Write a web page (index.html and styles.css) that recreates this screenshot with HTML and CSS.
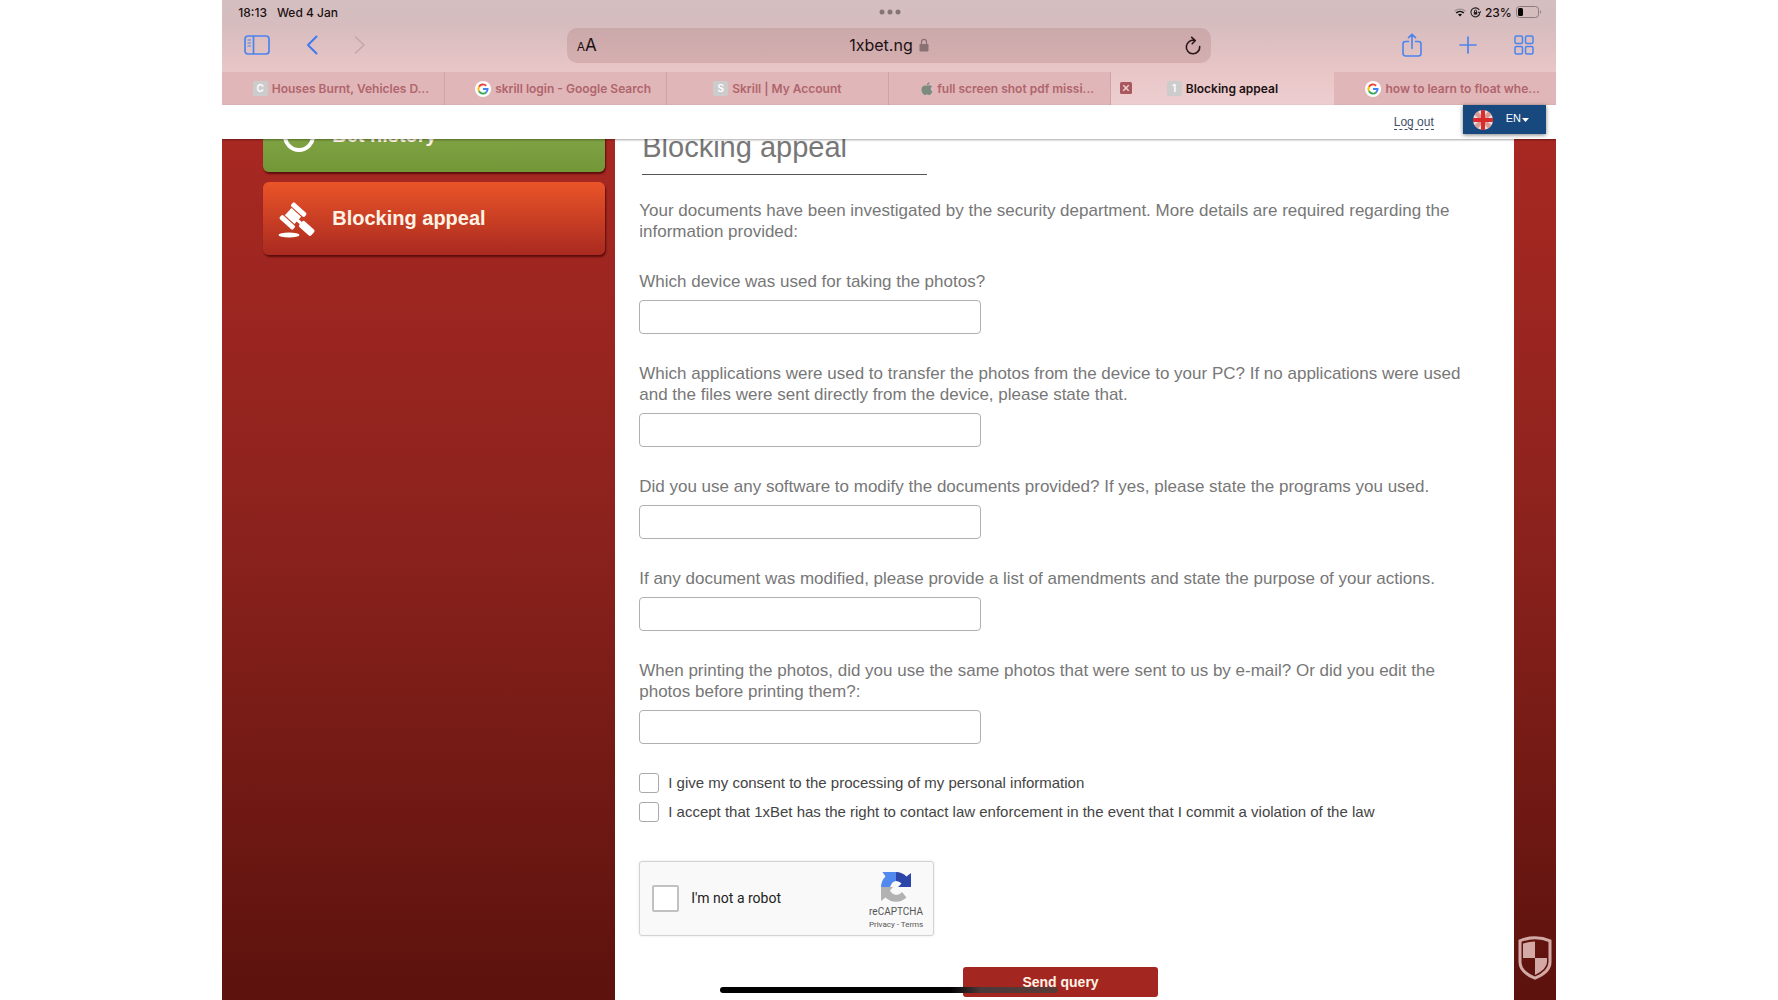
FILE: index.html
```html
<!DOCTYPE html>
<html lang="en">
<head>
  <meta charset="UTF-8">
  <meta name="viewport" content="width=device-width, initial-scale=1.0">
  <title>Blocking appeal</title>
  <link rel="stylesheet" href="styles.css">
</head>
<body>
  <div class="device">
    <div class="browser">
      <div class="status-bar">
        <div class="status-left"><span>18:13</span><span>Wed 4 Jan</span></div>
        <svg class="dots" width="22" height="6" viewBox="0 0 22 6" fill="#857376"><circle cx="3" cy="3" r="2.5"/><circle cx="11" cy="3" r="2.5"/><circle cx="19" cy="3" r="2.5"/></svg>
        <div class="status-right">
          <svg width="12" height="9" viewBox="0 0 12 9" fill="none"><path d="M.5 3.200C3.500.3 8.500.3 11.500 3.200" stroke="#a08e91" stroke-width="1.300"/><path d="M2.200 5C4.400 2.900 7.600 2.900 9.800 5" stroke="#111" stroke-width="1.600"/><path d="M4 6.500Q6 4.900 8 6.500L6 8.600z" fill="#111"/></svg>
          <svg width="11" height="11" viewBox="0 0 11 11" fill="none" stroke="#222"><path d="M9.800 6.500A4.500 4.500 0 1 1 9.300 3M10.600 4.200 9.600 6.200 8 4.800" stroke-width="1.100"/><rect x="3.800" y="5" width="3.400" height="2.600" fill="#222" stroke="none"/><path d="M4.500 5V4a1 1 0 0 1 2 0v1"/></svg>
          <span>23%</span>
          <svg width="26" height="12" viewBox="0 0 26 12" fill="none"><rect x=".5" y=".5" width="22" height="11" rx="3" stroke="#8d7c7e"/><rect x="2" y="2" width="5" height="8" rx="1.500" fill="#0a0505"/><path d="M24 4q2 2 0 4z" fill="#8d7c7e"/></svg>
        </div>
      </div>

      <div class="toolbar">
        <div class="tools tools-left">
          <button class="icon-btn" aria-label="Sidebar"><svg width="26" height="20" viewBox="0 0 26 20" fill="none" stroke="#4c84ee" stroke-width="1.700"><rect x="1" y="1" width="24" height="18" rx="3"/><path d="M9.500 1v18"/><path d="M3.500 5h3.500M3.500 8h3.500M3.500 11h3.500" stroke-width="1.200"/></svg></button>
          <button class="icon-btn" aria-label="Back"><svg width="12" height="20" viewBox="0 0 12 20" fill="none" stroke="#3f7bf0" stroke-width="2" stroke-linecap="round" stroke-linejoin="round"><path d="M10.500 1.500 2 10l8.500 8.500"/></svg></button>
          <button class="icon-btn" aria-label="Forward" disabled><svg width="12" height="20" viewBox="0 0 12 20" fill="none" stroke="#c8a6a8" stroke-width="1.700" stroke-linecap="round" stroke-linejoin="round"><path d="m1.500 2 8.500 8-8.500 8"/></svg></button>
        </div>
        <div class="address">
          <button class="text-size" aria-label="Text size"><small>A</small>A</button>
          <div class="url">1xbet.ng
            <svg width="10" height="14" viewBox="0 0 10 14"><rect x=".5" y="6" width="9" height="7.500" rx="1.200" fill="#8a7274"/><path d="M2.500 6.500V4a2.500 2.700 0 0 1 5 0v2.500" fill="none" stroke="#8a7274" stroke-width="1.200"/></svg>
          </div>
          <button class="icon-btn" aria-label="Reload"><svg width="16" height="19" viewBox="0 0 16 19" fill="none" stroke="#2b1518" stroke-width="1.600" stroke-linecap="round" stroke-linejoin="round"><path d="M9.500 4.500A6.700 6.700 0 1 0 14.700 10.500M6.700 1.300 10.300 4.500 7.200 7.700"/></svg></button>
        </div>
        <div class="tools tools-right">
          <button class="icon-btn" aria-label="Share"><svg width="20" height="24" viewBox="0 0 20 24" fill="none" stroke="#4c84ee" stroke-width="1.600" stroke-linecap="round" stroke-linejoin="round"><path d="M6.500 8.500H3.500A2.500 2.500 0 0 0 1 11v9.500A2.500 2.500 0 0 0 3.500 23h13a2.500 2.500 0 0 0 2.500-2.500V11a2.500 2.500 0 0 0-2.500-2.500h-3M10 15.500V1.200M6.500 4.600 10 1.200l3.500 3.400"/></svg></button>
          <button class="icon-btn" aria-label="New tab"><svg width="18" height="18" viewBox="0 0 18 18" stroke="#4c84ee" stroke-width="1.700" stroke-linecap="round"><path d="M9 1v16M1 9h16"/></svg></button>
          <button class="icon-btn" aria-label="Tab overview"><svg width="20" height="20" viewBox="0 0 20 20" fill="none" stroke="#4c84ee" stroke-width="1.500"><rect x="1" y="1" width="7.500" height="7.500" rx="1.500"/><rect x="11.500" y="1" width="7.500" height="7.500" rx="1.500"/><rect x="1" y="11.500" width="7.500" height="7.500" rx="1.500"/><rect x="11.500" y="11.500" width="7.500" height="7.500" rx="1.500"/></svg></button>
        </div>
      </div>

      <nav class="tabs">
        <a class="tab long" href="#"><span class="favicon">C</span><span class="tab-title">Houses Burnt, Vehicles D...</span></a>
        <a class="tab long" href="#"><svg class="google" width="16" height="16" viewBox="0 0 16 16" fill="none" stroke-width="1.900"><circle cx="8" cy="8" r="8" fill="#fff"/><path d="M4 5.700A4.600 4.600 0 0 1 11.200 4.700" stroke="#ea4335"/><path d="M4 10.300A4.600 4.600 0 0 1 4 5.700" stroke="#fbbc05"/><path d="M11 11.500A4.600 4.600 0 0 1 4 10.300" stroke="#34a853"/><path d="M8 8h4.600A4.600 4.600 0 0 1 11 11.500" stroke="#4285f4"/></svg><span class="tab-title">skrill login - Google Search</span></a>
        <a class="tab" href="#"><span class="favicon">S</span><span class="tab-title">Skrill | My Account</span></a>
        <a class="tab long" href="#"><svg width="12" height="14" viewBox="0 0 12 14" fill="#7c8b7f"><path d="M6 3.800C7 3.500 9.500 2.300 11 4.600 9 6 9.200 8.500 11.400 9.600 10.500 12 9 13.500 7.600 12.900 6.400 12.400 5.600 12.500 4.600 12.900 2.500 13.700.4 10.200.5 7.300.7 3.800 3.600 3 6 3.800zM5.900 3.200C5.800 1.600 7 .4 8.500.2 8.600 1.900 7.400 3.100 5.900 3.200z"/></svg><span class="tab-title">full screen shot pdf missi...</span></a>
        <div class="tab active">
          <button class="close" aria-label="Close tab"><svg width="12" height="12" viewBox="0 0 12 12"><rect width="12" height="12" rx="1.500" fill="#a9585f"/><path d="m3.300 3.300 5.400 5.400M8.700 3.300 3.300 8.700" stroke="#f4d5d6" stroke-width="1.400"/></svg></button>
          <span class="favicon">1</span><span class="tab-title">Blocking appeal</span>
        </div>
        <a class="tab long" href="#"><svg class="google" width="16" height="16" viewBox="0 0 16 16" fill="none" stroke-width="1.900"><circle cx="8" cy="8" r="8" fill="#fff"/><path d="M4 5.700A4.600 4.600 0 0 1 11.200 4.700" stroke="#ea4335"/><path d="M4 10.300A4.600 4.600 0 0 1 4 5.700" stroke="#fbbc05"/><path d="M11 11.500A4.600 4.600 0 0 1 4 10.300" stroke="#34a853"/><path d="M8 8h4.600A4.600 4.600 0 0 1 11 11.500" stroke="#4285f4"/></svg><span class="tab-title">how to learn to float whe...</span></a>
      </nav>
    </div>

    <header class="site-header">
      <a class="logout" href="#">Log out</a>
      <label class="language">
        <svg width="20" height="20" viewBox="0 0 20 20"><circle cx="10" cy="10" r="10" fill="#f0dcdc"/><path d="M1.500 4.800 4.800 1.500 8 5v3H5zM18.500 4.800 15.200 1.500 12 5v3h3zM1.500 15.200l3.300 3.300L8 15v-3H5zM18.500 15.200l-3.300 3.300L12 15v-3h3z" fill="#dc9a96"/><path d="M8 .2Q10-.2 12 .2V8h7.800q.4 2 0 4H12v7.800q-2 .4-4 0V12H.2q-.4-2 0-4H8z" fill="#d92b2b"/></svg>
        <select aria-label="Language"><option>EN</option></select>
        <svg class="caret" width="7" height="4" viewBox="0 0 7 4" fill="#fff"><path d="M0 0h7L3.500 4z"/></svg>
      </label>
    </header>

    <div class="page">
      <aside class="sidebar">
        <a class="menu-item green" href="#">
          <svg width="38" height="38" viewBox="0 0 38 38" fill="none" stroke="#fff" stroke-width="4"><circle cx="21" cy="19" r="14"/><path d="M21 11v8h6" stroke-width="3"/></svg>
          Bet history
        </a>
        <a class="menu-item red" href="#">
          <svg width="38" height="38" viewBox="0 0 38 38" fill="#fff"><ellipse cx="11" cy="35" rx="10.500" ry="2.500"/><g transform="rotate(42 15 16)"><rect x="6" y="5" width="18" height="5" rx="1.500"/><rect x="8.500" y="11" width="13" height="10"/><rect x="6" y="22" width="18" height="5" rx="1.500"/><path d="M21 14.500h5v3h-5z"/><rect x="25.500" y="12" width="16" height="8" rx="2"/></g></svg>
          Blocking appeal
        </a>
      </aside>

      <main class="content">
        <h1>Blocking appeal</h1>
        <form class="appeal-form">
          <p>Your documents have been investigated by the security department. More details are required regarding the information provided:</p>
          <div class="field">
            <label for="device">Which device was used for taking the photos?</label>
            <input type="text" id="device">
          </div>
          <div class="field">
            <label for="apps">Which applications were used to transfer the photos from the device to your PC? If no applications were used and the files were sent directly from the device, please state that.</label>
            <input type="text" id="apps">
          </div>
          <div class="field">
            <label for="software">Did you use any software to modify the documents provided? If yes, please state the programs you used.</label>
            <input type="text" id="software">
          </div>
          <div class="field">
            <label for="changes">If any document was modified, please provide a list of amendments and state the purpose of your actions.</label>
            <input type="text" id="changes">
          </div>
          <div class="field">
            <label for="printing">When printing the photos, did you use the same photos that were sent to us by e-mail? Or did you edit the photos before printing them?:</label>
            <input type="text" id="printing">
          </div>
          <div class="consents">
            <label class="check"><input type="checkbox">I give my consent to the processing of my personal information</label>
            <label class="check"><input type="checkbox">I accept that 1xBet has the right to contact law enforcement in the event that I commit a violation of the law</label>
          </div>
          <div class="captcha">
            <label class="robot"><input type="checkbox">I'm not a robot</label>
            <div class="captcha-brand">
              <svg width="32" height="32" viewBox="0 0 32 32"><path d="M16 1v9a6 6 0 0 0-5 4l-1 2H1A15 15 0 0 1 5.500 5.500L2.500 1z" fill="#5289ee"/><path d="M16 1a15 15 0 0 1 10.500 4.500L31 2v14H18l3.500-3.500A7 7 0 0 0 16 10z" fill="#2c45a8"/><path d="M1 16h12l-3 3.500a7 7 0 0 0 12 1.500l4.500 5.500A15 15 0 0 1 5.500 26.500L1 30z" fill="#b2b2b2"/></svg>
              <span class="brand-name">reCAPTCHA</span>
              <span class="brand-links"><a href="#">Privacy</a> - <a href="#">Terms</a></span>
            </div>
          </div>
          <button class="send" type="submit">Send query</button>
        </form>
      </main>
    </div>

    <svg class="shield" width="34" height="44" viewBox="0 0 34 44"><path d="M17 1.800q8 0 15 3V26q0 10-15 16.200Q2 36 2 26V4.800q7-3 15-3z" fill="none" stroke="#d3a9a6" stroke-width="3"/><path d="M17 5.500V22H5V7.500q6-2 12-2zM17 22h12v4q0 7-12 13z" fill="#d3a9a6"/></svg>
    <div class="home-indicator"></div>
  </div>
</body>
</html>
```

FILE: styles.css
```css
* {
  margin: 0;
  padding: 0;
  box-sizing: border-box;
}

body {
  background: #fff;
  font-family: "Liberation Sans", Arial, sans-serif;
}

button {
  border: none;
  background: none;
  font: inherit;
  color: inherit;
  cursor: pointer;
}

a {
  color: inherit;
  text-decoration: none;
}

svg {
  display: block;
  flex: none;
}

.device {
  position: relative;
  display: flex;
  flex-direction: column;
  width: 75%;
  height: 100vh;
  margin: 0 auto;
  overflow: hidden;
}

/* browser chrome */
.browser {
  flex: none;
  background: linear-gradient(#d4bfc0 0, #d6bcbe 24px, #e8c5c6 68px, #edced0 100%);
  font-family: Inter, sans-serif;
}

.status-bar,
.toolbar {
  display: grid;
  grid-template-columns: 1fr auto 1fr;
  align-items: center;
}

.status-bar {
  height: 24px;
  padding: 0 14px 0 16px;
  font-size: 12px;
  font-weight: 500;
  color: #1c1113;
}

.status-left,
.status-right {
  display: flex;
  align-items: center;
}

.status-left {
  gap: 10px;
}

.status-right {
  justify-content: flex-end;
  gap: 4px;
}

.toolbar {
  grid-template-columns: 1fr 50% 1fr;
  height: 48px;
  padding: 0 22px 6px;
}

.tools {
  display: flex;
  align-items: center;
}

.tools-left {
  gap: 36px;
}

.tools-right {
  justify-content: flex-end;
  gap: 37px;
}

.address {
  display: grid;
  grid-template-columns: 1fr auto 1fr;
  align-items: center;
  height: 35px;
  padding: 0 10px;
  border-radius: 10px;
  background: rgba(150, 90, 90, 0.2);
  color: #1c1113;
}

.address .icon-btn {
  justify-self: end;
}

.text-size {
  justify-self: start;
  font-size: 17px;
}

.text-size small {
  font-size: 12px;
}

.url {
  display: flex;
  align-items: center;
  gap: 6px;
  font-size: 16px;
}

.tabs {
  display: grid;
  grid-template-columns: repeat(6, 1fr);
  height: 33px;
}

.tab {
  position: relative;
  min-width: 0;
  display: flex;
  align-items: center;
  justify-content: center;
  gap: 4px;
  border-right: 1px solid #d0a3a6;
  background: #e0b6b8;
  font-size: 12px;
  font-weight: 600;
  color: #b0656d;
  white-space: nowrap;
}

.tab.long {
  padding-left: 16px;
}

.tab:last-child,
.tab.active {
  border-right: none;
}

.tab.active {
  background: none;
  color: #1c1113;
}

.favicon {
  width: 15px;
  height: 15px;
  border-radius: 2px;
  background: #cccccd;
  color: #fff;
  font-size: 10px;
  line-height: 15px;
  text-align: center;
}

.close {
  position: absolute;
  left: 9px;
  top: 10px;
}

/* site */
.site-header {
  position: relative;
  z-index: 1;
  flex: none;
  display: flex;
  align-items: flex-start;
  justify-content: flex-end;
  gap: 29px;
  height: 34px;
  padding-right: 10px;
  background: #fff;
  box-shadow: 0 1px 2px rgba(0, 0, 0, 0.35);
}

.logout {
  margin-top: 10px;
  border-bottom: 1px dashed #3e4f6b;
  font-size: 12px;
  line-height: 14px;
  color: #3e4f6b;
}

.language {
  display: flex;
  align-items: center;
  height: 29px;
  padding: 0 17px 0 10px;
  background: #17497f;
  box-shadow: 0 1px 4px rgba(0, 0, 0, 0.5);
}

.language select {
  appearance: none;
  margin: 0 0 4px 13px;
  border: none;
  background: none;
  color: #fff;
  font: 11px "Liberation Sans", Arial, sans-serif;
}

.page {
  flex: 1;
  display: flex;
  min-height: 0;
  padding-right: 42px;
  background: linear-gradient(#a82822, #8c221d 45%, #5c120d);
  overflow: hidden;
}

.sidebar {
  flex: 0 0 393px;
  display: flex;
  flex-direction: column;
  gap: 10px;
  padding: 0 10px 0 41px;
}

.menu-item {
  display: flex;
  align-items: center;
  gap: 16px;
  height: 73px;
  padding: 0 15px;
  border-radius: 6px;
  box-shadow: 1px 2px 2px rgba(60, 0, 0, 0.7);
  font-size: 20px;
  font-weight: bold;
  color: #fff3e6;
}

/* first item is scrolled under the header */
.menu-item.green {
  margin-top: -40px;
  background: linear-gradient(#8fae52, #729737);
}

.menu-item.red {
  background: linear-gradient(#ea5428, #a92a20);
}

.content {
  flex: 1;
  min-width: 0;
  padding: 0 32px 0 24px;
  background: #fff;
}

.content h1 {
  width: 285px;
  margin: -8px 0 25px 3px;
  padding-bottom: 10px;
  border-bottom: 1px solid #555;
  font-size: 29px;
  font-weight: normal;
  line-height: 33px;
  color: #777;
}

.appeal-form {
  display: flex;
  flex-direction: column;
  gap: 29px;
  font-size: 17px;
  line-height: 21px;
  color: #777;
}

.field {
  display: flex;
  flex-direction: column;
  gap: 8px;
}

.field input {
  width: 342px;
  height: 34px;
  padding: 0 8px;
  border: 1px solid #b0b0b0;
  border-radius: 4px;
  font: inherit;
}

.consents {
  display: flex;
  flex-direction: column;
  gap: 9px;
}

.check {
  display: flex;
  align-items: center;
  gap: 9px;
  font-size: 15px;
  line-height: 20px;
  color: #444;
}

.check input,
.robot input {
  appearance: none;
  width: 20px;
  height: 20px;
  border: 1px solid #aaa;
  border-radius: 3px;
  background: #fff;
}

.captcha {
  display: flex;
  align-items: center;
  justify-content: space-between;
  width: 295px;
  height: 75px;
  margin-top: 10px;
  padding: 0 10px 0 12px;
  border: 1px solid #d3d3d3;
  border-radius: 3px;
  background: #f9f9f9;
  box-shadow: 0 0 3px rgba(0, 0, 0, 0.1);
  font-family: Roboto, sans-serif;
}

.robot {
  display: flex;
  align-items: center;
  gap: 12px;
  font-size: 14px;
  color: #222;
}

.robot input {
  width: 27px;
  height: 27px;
  border: 2px solid #c1c1c1;
  border-radius: 2px;
}

.captcha-brand {
  display: flex;
  flex-direction: column;
  align-items: center;
  padding-top: 4px;
  color: #555;
}

.brand-name {
  margin-top: 2px;
  font-size: 10px;
  line-height: 14px;
}

.brand-links {
  font-size: 8px;
  line-height: 12px;
}

.send {
  align-self: center;
  width: 195px;
  height: 30px;
  margin-top: 2px;
  border-radius: 3px;
  background: #a32620;
  font-size: 14px;
  font-weight: bold;
  color: #fff3e6;
}

.shield {
  position: absolute;
  right: 4px;
  bottom: 20px;
}

.home-indicator {
  position: absolute;
  left: 50%;
  bottom: 7px;
  width: 338px;
  height: 6px;
  margin-left: -169px;
  border-radius: 3px;
  background: linear-gradient(90deg, #000 68%, #4a3a3a 77%, #5a3a38);
}
```
